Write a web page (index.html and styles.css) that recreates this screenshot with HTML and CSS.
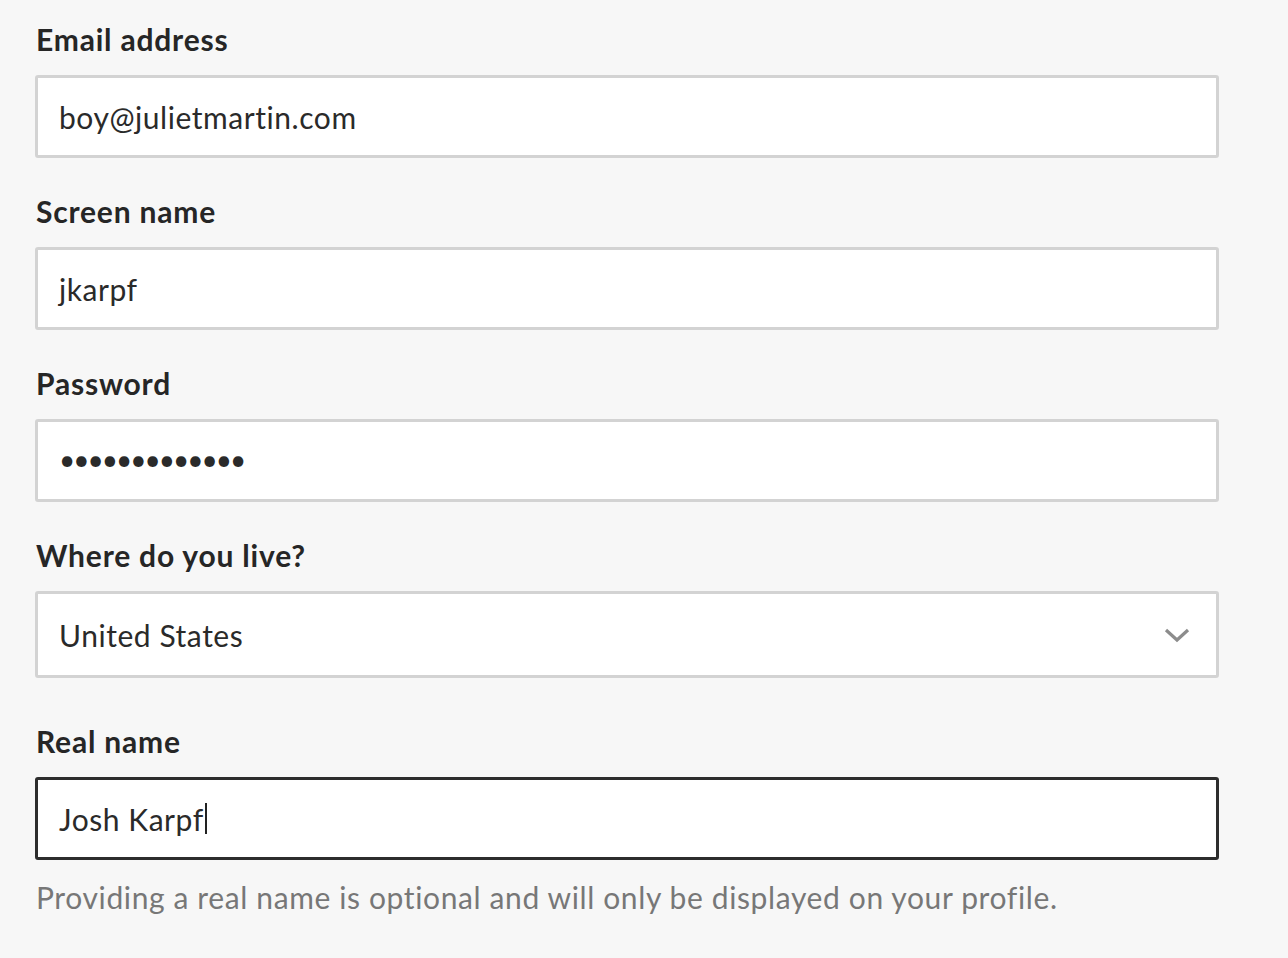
FILE: index.html
```html
<!DOCTYPE html>
<html>
<head>
<meta charset="utf-8">
<link rel="stylesheet" href="styles.css">
</head>
<body>
<form class="form">
  <div class="field">
    <label class="label">Email address</label>
    <div class="input">boy@julietmartin.com</div>
  </div>
  <div class="field">
    <label class="label">Screen name</label>
    <div class="input">jkarpf</div>
  </div>
  <div class="field">
    <label class="label">Password</label>
    <div class="input"><span class="dots">•••••••••••••</span></div>
  </div>
  <div class="field field-select">
    <label class="label">Where do you live?</label>
    <div class="input select">
      <span>United States</span>
      <svg class="chevron" width="26" height="16" viewBox="0 0 26 16"><path d="M2 3 L13 13 L24 3" fill="none" stroke="#8c8c8c" stroke-width="3.2"/></svg>
    </div>
  </div>
  <div class="field">
    <label class="label">Real name</label>
    <div class="input focused">Josh Karpf<span class="caret"></span></div>
    <p class="help">Providing a real name is optional and will only be displayed on your profile.</p>
  </div>
</form>
</body>
</html>
```
FILE: styles.css
```css
html, body {
  margin: 0;
  padding: 0;
  background: #f7f7f7;
}
body {
  font-family: Lato, "Noto Sans", sans-serif;
  color: #262626;
}
.form {
  width: 1184px;
  padding: 21px 0 0 35px;
}
.field {
  margin-bottom: 35px;
}
.field-select {
  margin-bottom: 45px;
}
.label {
  display: block;
  font-size: 30px;
  line-height: 36px;
  font-weight: 700;
  letter-spacing: 0.8px;
  color: #262626;
  margin: 0 0 18px 1px;
}
.input {
  box-sizing: border-box;
  height: 83px;
  background: #fff;
  border: 3.5px solid #d3d3d3;
  border-radius: 3px;
  padding: 0 21px;
  display: flex;
  align-items: center;
  font-size: 30px;
  letter-spacing: 0.55px;
  color: #2a2a2a;
}
.select {
  height: 87px;
  justify-content: space-between;
  padding-right: 26px;
}
.chevron {
  display: block;
}
.focused {
  border-color: #2d2d2d;
}
.caret {
  display: inline-block;
  width: 2px;
  height: 31px;
  background: #222;
  margin-left: 1px;
}
.dots {
  font-size: 28px;
  letter-spacing: -2px;
  margin-bottom: 4px;
}
.help {
  margin: 19px 0 0 1px;
  font-size: 30px;
  line-height: 36px;
  letter-spacing: 0.62px;
  color: #777;
}
```
